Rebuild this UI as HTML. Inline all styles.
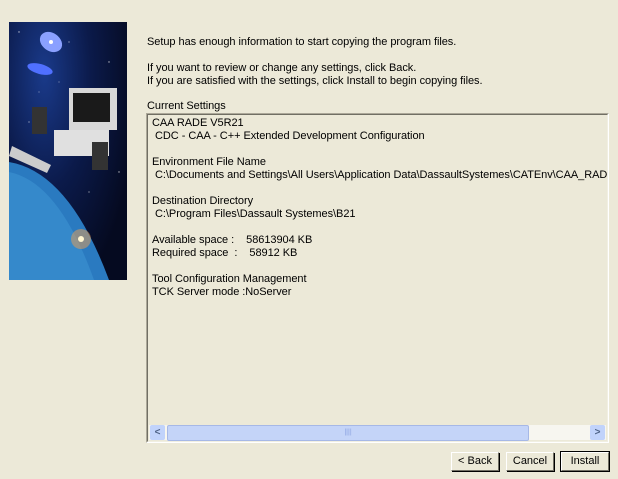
<!DOCTYPE html>
<html><head><style>
body{margin:0;width:618px;height:479px;background:#ece9d8;font-family:"Liberation Sans",Tahoma,sans-serif;font-size:11px;color:#000;position:relative;overflow:hidden}
.t{position:absolute;white-space:pre;line-height:13px;letter-spacing:-0.05px}
#img{position:absolute;left:9px;top:22px;width:118px;height:258px;overflow:hidden;
background:radial-gradient(ellipse at 30% 20%,#1a3a8a 0%,#0b1a4a 40%,#050a20 80%)}
#box{position:absolute;left:146px;top:113px;width:461px;height:328px;border:1px solid;border-color:#aca899 #fff #fff #aca899}
#inner{position:absolute;left:0;top:0;right:0;bottom:0;border:1px solid;border-color:#716f64 #f1efe2 #f1efe2 #716f64;overflow:hidden}
.btn{position:absolute;top:452px;width:46px;height:17px;border:1px solid;border-color:#fff #716f64 #716f64 #fff;box-shadow:1px 1px 0 #000;text-align:center;line-height:17px;font-size:11px}
</style></head><body>
<div id="img">
<svg width="118" height="258" viewBox="0 0 118 258">
<g fill="#fff" opacity=".7"><circle cx="10" cy="10" r=".7"/><circle cx="60" cy="20" r=".6"/><circle cx="100" cy="40" r=".7"/><circle cx="90" cy="80" r=".6"/><circle cx="20" cy="100" r=".6"/><circle cx="110" cy="150" r=".7"/><circle cx="50" cy="60" r=".5"/><circle cx="80" cy="170" r=".6"/><circle cx="30" cy="70" r=".5"/></g>
<ellipse cx="42" cy="20" rx="12" ry="9" fill="#8aa0ff" transform="rotate(35 42 20)"/>
<ellipse cx="42" cy="20" rx="2" ry="2" fill="#fff"/>
<ellipse cx="31" cy="47" rx="13" ry="5" fill="#5070ff" transform="rotate(15 31 47)"/>
<path d="M0 140 Q60 150 100 258 L0 258Z" fill="#2a7ac0"/>
<path d="M0 150 Q50 160 85 258 L0 258Z" fill="#3a90d0" opacity=".7"/>
<circle cx="72" cy="217" r="10" fill="#f0a050" opacity=".5"/><circle cx="72" cy="217" r="3" fill="#fff5d0"/>
<rect x="60" y="66" width="48" height="42" fill="#d8d8d8"/><rect x="64" y="71" width="37" height="29" fill="#1a1a1a"/>
<rect x="45" y="108" width="55" height="26" fill="#e0e0e0"/>
<rect x="23" y="85" width="15" height="27" fill="#333"/><rect x="83" y="120" width="16" height="28" fill="#333"/>
<path d="M3 124 L42 143 L38 151 L0 134Z" fill="#ccc"/>
</svg></div>
<div class="t" style="left:147px;top:36px">Setup has enough information to start copying the program files.</div>
<div class="t" style="left:147px;top:62px">If you want to review or change any settings, click Back.
If you are satisfied with the settings, click Install to begin copying files.</div>
<div class="t" style="left:147px;top:100px">Current Settings</div>
<div id="box"><div id="inner">
<div class="t" style="left:4px;top:2px">CAA RADE V5R21
 CDC - CAA - C++ Extended Development Configuration

Environment File Name
 C:\Documents and Settings\All Users\Application Data\DassaultSystemes\CATEnv\CAA_RADE

Destination Directory
 C:\Program Files\Dassault Systemes\B21

Available space :    58613904 KB
Required space  :    58912 KB

Tool Configuration Management
TCK Server mode :NoServer</div>
<div style="position:absolute;left:1px;right:1px;bottom:1px;height:15px;background:#f7f6f0">
<div style="position:absolute;left:1px;top:0;width:15px;height:15px;background:#c1d3fb;border-radius:2px;color:#4d6185;font-size:10px;line-height:15px;text-align:center;font-weight:bold">&lt;</div>
<div style="position:absolute;left:18px;top:0;width:360px;height:14px;background:#c4d4f8;border:1px solid #a6b8e6;border-radius:2px;color:#8aa2e0;text-align:center;line-height:14px;font-size:7px">||||</div>
<div style="position:absolute;right:1px;top:0;width:15px;height:15px;background:#c1d3fb;border-radius:2px;color:#4d6185;font-size:10px;line-height:15px;text-align:center;font-weight:bold">&gt;</div>
</div>
</div></div>
<div class="btn" style="left:451px">&lt; Back</div>
<div class="btn" style="left:506px">Cancel</div>
<div class="btn" style="left:561px;outline:1px solid #000">Install</div>
</body></html>
